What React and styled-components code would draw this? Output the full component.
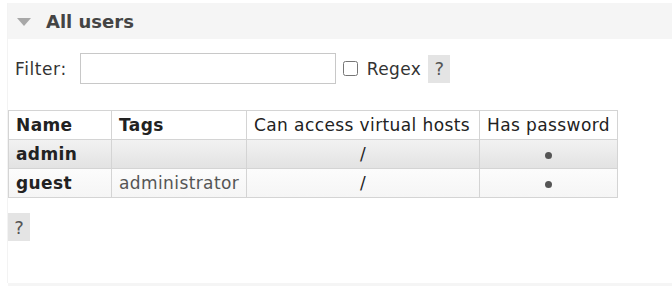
import React from 'react'
import styled, { createGlobalStyle } from 'styled-components'

const Global = createGlobalStyle`
  html, body {
    margin: 0;
    background: #fff;
  }
  body {
    font-family: "DejaVu Sans", Verdana, sans-serif;
    color: #333;
    font-size: 17px;
    letter-spacing: 0.4px;
  }
`

const users = [
  { name: 'admin', tags: '', vhosts: '/', password: true },
  { name: 'guest', tags: 'administrator', vhosts: '/', password: true },
]

const columns = [
  { label: 'Name', width: 103, bold: true },
  { label: 'Tags', width: 135, bold: true },
  { label: 'Can access virtual hosts', width: 233 },
  { label: 'Has password', width: 138 },
]

function App() {
  return (
    <Page>
      <Global />
      <Section>
        <Header>
          <Arrow />
          <Title>All users</Title>
        </Header>
        <Body>
          <FilterRow>
            <label>Filter:</label>
            <FilterInput type="text" />
            <Check type="checkbox" />
            <span>Regex</span>
            <Help>?</Help>
          </FilterRow>

          <Table>
            <colgroup>
              {columns.map(c => (
                <col key={c.label} style={{ width: c.width }} />
              ))}
            </colgroup>
            <thead>
              <tr>
                {columns.map(c => (
                  <Th key={c.label} $bold={c.bold}>{c.label}</Th>
                ))}
              </tr>
            </thead>
            <tbody>
              {users.map((u, i) => (
                <Row key={u.name} $alt={i % 2 === 0}>
                  <Td $bold>{u.name}</Td>
                  <Td $muted>{u.tags}</Td>
                  <Td $center>{u.vhosts}</Td>
                  <Td $center>{u.password ? <Dot /> : null}</Td>
                </Row>
              ))}
            </tbody>
          </Table>

          <Help $block>?</Help>
        </Body>
      </Section>
      <NextSection />
    </Page>
  )
}

const Page = styled.div`
  padding: 3px 0 0 7px;
  height: 286px;
  box-sizing: border-box;
  overflow: hidden;
`

const Section = styled.div`
  border-left: 1px solid #f3f3f3;
`

const Header = styled.div`
  height: 36px;
  background: #f5f5f5;
  display: flex;
  align-items: center;
  padding-left: 9px;
`

const Arrow = styled.span`
  width: 0;
  height: 0;
  border-left: 7px solid transparent;
  border-right: 7px solid transparent;
  border-top: 8px solid #a8a8a8;
  margin-right: 15px;
  margin-top: 1px;
`

const Title = styled.h2`
  margin: 0;
  font-size: 18px;
  font-weight: bold;
  letter-spacing: 0;
  color: #444;
`

const Body = styled.div`
  padding: 14px 0 42px 0;
`

const FilterRow = styled.div`
  display: flex;
  align-items: center;
  margin-left: 7px;
  color: #333;

  label {
    margin-right: 13px;
    letter-spacing: 0.6px;
  }
  span {
    margin-right: 7px;
  }
`

const FilterInput = styled.input`
  width: 256px;
  height: 31px;
  box-sizing: border-box;
  border: 1px solid #c8c8c8;
  outline: none;
  margin: 0;
`

const Check = styled.input`
  width: 15px;
  height: 15px;
  margin: 0 9px 0 7px;
`

const Help = styled.span`
  display: ${p => (p.$block ? 'flex' : 'inline-flex')};
  width: 22px;
  height: 28px;
  align-items: center;
  justify-content: center;
  background: #e4e4e4;
  color: #555;
  font-size: 18px;
  letter-spacing: 0;
  margin-top: ${p => (p.$block ? '15px' : '0')};
`

const Table = styled.table`
  border-collapse: collapse;
  table-layout: fixed;
  margin-top: 26px;
  width: 610px;
  font-size: 17px;

  th, td {
    border: 1px solid #d4d4d4;
    height: 28px;
    padding: 0 7px;
    overflow: hidden;
  }
`

const Th = styled.th`
  text-align: left;
  font-weight: ${p => (p.$bold ? 'bold' : 'normal')};
  background: #fff;
  color: #222;
  white-space: nowrap;
`

const Row = styled.tr`
  background: ${p =>
    p.$alt
      ? 'linear-gradient(#f2f2f2, #e2e2e2)'
      : 'linear-gradient(#fcfcfc, #f5f5f5)'};
`

const Td = styled.td`
  font-weight: ${p => (p.$bold ? 'bold' : 'normal')};
  text-align: ${p => (p.$center ? 'center' : 'left')};
  color: ${p => (p.$muted ? '#555' : '#222')};
  white-space: nowrap;
`

const Dot = styled.span`
  display: inline-block;
  width: 7px;
  height: 7px;
  border-radius: 50%;
  background: #555;
  vertical-align: middle;
`

const NextSection = styled.div`
  height: 36px;
  background: #f5f5f5;
  margin-left: 1px;
`

export default App
